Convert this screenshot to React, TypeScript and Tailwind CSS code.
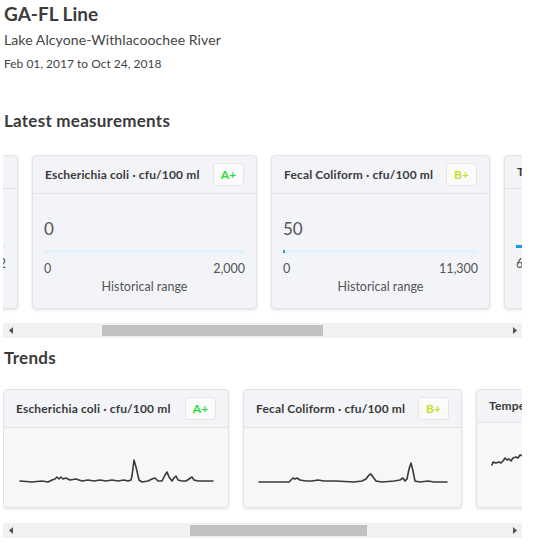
import React from "react";

type Badge = { text: string; color: string } | null;

function BadgeBox({ badge }: { badge: Badge }) {
  if (!badge) return null;
  return (
    <div
      className={`flex h-[23px] w-[31px] items-center justify-center rounded-[3px] border border-[#e6e6e6] bg-[#fbfbfb] text-[12px] font-bold ${badge.color}`}
    >
      {badge.text}
    </div>
  );
}

function CardHeader({ title, badge }: { title: string; badge: Badge }) {
  return (
    <div
      className={`flex items-center justify-between gap-2 whitespace-nowrap border-b border-[#e2e3e7] px-[12px] ${
        badge ? "h-[38px]" : "h-[33px]"
      }`}
    >
      <span className="text-[12px] font-bold tracking-[0.15px] text-[#3a3a3a]">{title}</span>
      <BadgeBox badge={badge} />
    </div>
  );
}

function MeasureCard({
  title,
  badge,
  value,
  min,
  max,
  fill,
  width,
}: {
  title: string;
  badge: Badge;
  value: string;
  min: string;
  max: string;
  fill: string;
  width: string;
}) {
  return (
    <div
      className={`shrink-0 overflow-hidden rounded-[4px] border border-[#e3e4e8] bg-[#f3f4f8] shadow-[0_1px_3px_rgba(0,0,0,0.12)] ${width}`}
    >
      <CardHeader title={title} badge={badge} />
      <div className="px-[11px] pb-[13px] pt-[25px]">
        <div className="h-[20px] text-[17px] leading-[20px] text-[#555]">{value}</div>
        <div className="mt-[11px] flex h-[3px] bg-[#e0f3fb]">
          <div className={`h-full bg-[#1c9be2] ${fill}`} />
        </div>
        <div className="mt-[8px] flex justify-between text-[12.5px] leading-[16px] text-[#555]">
          <span>{min}</span>
          <span>{max}</span>
        </div>
        <div className="mt-[2px] text-center text-[12.5px] leading-[16px] text-[#555]">
          Historical range
        </div>
      </div>
    </div>
  );
}

function TrendCard({
  title,
  badge,
  path,
  width,
}: {
  title: string;
  badge: Badge;
  path: string;
  width: string;
}) {
  return (
    <div
      className={`shrink-0 overflow-hidden rounded-[4px] border border-[#e3e4e8] bg-[#f7f7f7] shadow-[0_1px_3px_rgba(0,0,0,0.12)] ${width}`}
    >
      <div className="bg-[#f3f4f7]">
        <CardHeader title={title} badge={badge} />
      </div>
      <div className={badge ? "h-[79px]" : "h-[84px]"}>
        <svg width="100%" height="100%" className="block">
          <path
            d={path}
            fill="none"
            stroke="#3a3a3a"
            strokeWidth="1.6"
            strokeLinejoin="round"
            strokeLinecap="round"
          />
        </svg>
      </div>
    </div>
  );
}

function FakeScrollbar({ thumb }: { thumb: string }) {
  return (
    <div className="flex h-[15px] w-[519px] bg-[#f1f1f1]">
      <div className="flex w-[15px] items-center justify-center">
        <svg width="4" height="7" viewBox="0 0 4 7">
          <path d="M4 0 L0 3.5 L4 7 Z" fill="#505050" />
        </svg>
      </div>
      <div className="flex flex-1 items-center">
        <div className={`h-[11px] bg-[#c1c1c1] ${thumb}`} />
      </div>
      <div className="flex w-[15px] items-center justify-center">
        <svg width="4" height="7" viewBox="0 0 4 7">
          <path d="M0 0 L4 3.5 L0 7 Z" fill="#505050" />
        </svg>
      </div>
    </div>
  );
}

const ecoliPath =
  "M16 53 L28 54 L38 53 L44 54 L48 52 L51 51 L53 49 L55 51 L57 49 L59 51 L62 50 L66 52 L72 51 L78 53 L84 52 L90 53 L96 52 L102 53 L108 52 L114 53 L120 52 L124 53 L127 52 L128 48 L130 32 L132 39 L135 52 L138 54 L144 53 L148 51 L151 50 L154 53 L158 53 L161 47 L163 44 L165 49 L168 53 L170 50 L172 48 L174 52 L178 53 L182 53 L185 51 L188 49 L190 52 L194 53 L209 53";
const fecalPath =
  "M15 54 L45 54 L47 52 L49 50 L51 51 L53 50 L56 52 L62 53 L68 53 L74 52 L80 53 L92 53 L110 54 L118 53 L122 51 L125 47 L127 46 L129 49 L132 53 L138 54 L150 53 L156 52 L159 50 L161 53 L163 51 L165 41 L167 35 L169 43 L171 53 L176 54 L184 53 L190 54 L203 54";
const tempPath =
  "M15 42 L16 39 L19 40 L22 39 L24 40 L26 38 L28 35 L30 37 L32 36 L34 38 L36 35 L39 34 L41 35 L43 32 L46 33 L50 31 L56 32 L62 29 L70 30 L80 27 L90 29 L100 26 L110 27 L120 25 L130 27 L140 24 L150 26 L160 23 L170 25 L180 22 L190 24 L205 23";
const genericPath =
  "M15 50 L30 48 L45 51 L60 46 L75 49 L90 44 L105 48 L120 40 L135 47 L150 45 L165 49 L180 43 L195 47 L210 46";

export default function App() {
  const setMeasure = (el: HTMLDivElement | null) => {
    if (el) el.scrollLeft = 197;
  };
  const setTrend = (el: HTMLDivElement | null) => {
    if (el) el.scrollLeft = 502;
  };

  return (
    <div className="w-[533px] bg-white pl-[3px] pt-[2px] font-['Lato',sans-serif] text-[#3b3b3b]">
      <h1 className="pl-[1px] text-[19px] font-bold leading-[24px]">GA-FL Line</h1>
      <div className="mt-[5px] pl-[1px] text-[14px] leading-[18px] tracking-[0.1px] text-[#444]">
        Lake Alcyone-Withlacoochee River
      </div>
      <div className="mt-[7px] pl-[1px] text-[12px] leading-[16px] text-[#444]">
        Feb 01, 2017 to Oct 24, 2018
      </div>

      <h2 className="mt-[38px] pl-[1px] text-[17px] font-bold leading-[22px] tracking-[0.25px]">
        Latest measurements
      </h2>
      <div ref={setMeasure} className="mt-[23px] w-[519px] overflow-hidden pb-[4px]">
        <div className="flex w-max gap-[14px]">
          <MeasureCard
            title="Dissolved Oxygen · mg/L"
            badge={null}
            value="8.1"
            min="0"
            max="12"
            fill="w-[60%]"
            width="w-[212px]"
          />
          <MeasureCard
            title="Escherichia coli · cfu/100 ml"
            badge={{ text: "A+", color: "text-[#1fe03a]" }}
            value="0"
            min="0"
            max="2,000"
            fill="w-0"
            width="w-[225px]"
          />
          <MeasureCard
            title="Fecal Coliform · cfu/100 ml"
            badge={{ text: "B+", color: "text-[#c4e01c]" }}
            value="50"
            min="0"
            max="11,300"
            fill="w-[2px]"
            width="w-[219px]"
          />
          <MeasureCard
            title="Temperature · °C"
            badge={null}
            value=""
            min="6"
            max="31"
            fill="w-[45%]"
            width="w-[225px]"
          />
          <MeasureCard
            title="pH · units"
            badge={null}
            value="7.4"
            min="5"
            max="9"
            fill="w-[50%]"
            width="w-[211px]"
          />
        </div>
      </div>
      <div className="mt-[10px]">
        <FakeScrollbar thumb="ml-[84px] w-[221px]" />
      </div>

      <h2 className="mt-[9px] pl-[1px] text-[17px] font-bold leading-[22px] tracking-[0.25px]">Trends</h2>
      <div ref={setTrend} className="mt-[20px] w-[519px] overflow-hidden pb-[4px]">
        <div className="flex w-max gap-[14px]">
          <TrendCard title="Dissolved Oxygen · mg/L" badge={null} path={genericPath} width="w-[237px]" />
          <TrendCard title="Turbidity · NTU" badge={null} path={genericPath} width="w-[237px]" />
          <TrendCard
            title="Escherichia coli · cfu/100 ml"
            badge={{ text: "A+", color: "text-[#1fe03a]" }}
            path={ecoliPath}
            width="w-[226px]"
          />
          <TrendCard
            title="Fecal Coliform · cfu/100 ml"
            badge={{ text: "B+", color: "text-[#c4e01c]" }}
            path={fecalPath}
            width="w-[219px]"
          />
          <TrendCard title="Temperature · °C" badge={null} path={tempPath} width="w-[225px]" />
          <TrendCard title="pH · units" badge={null} path={genericPath} width="w-[212px]" />
        </div>
      </div>
      <div className="mt-[11px]">
        <FakeScrollbar thumb="ml-[172px] w-[177px]" />
      </div>
    </div>
  );
}
